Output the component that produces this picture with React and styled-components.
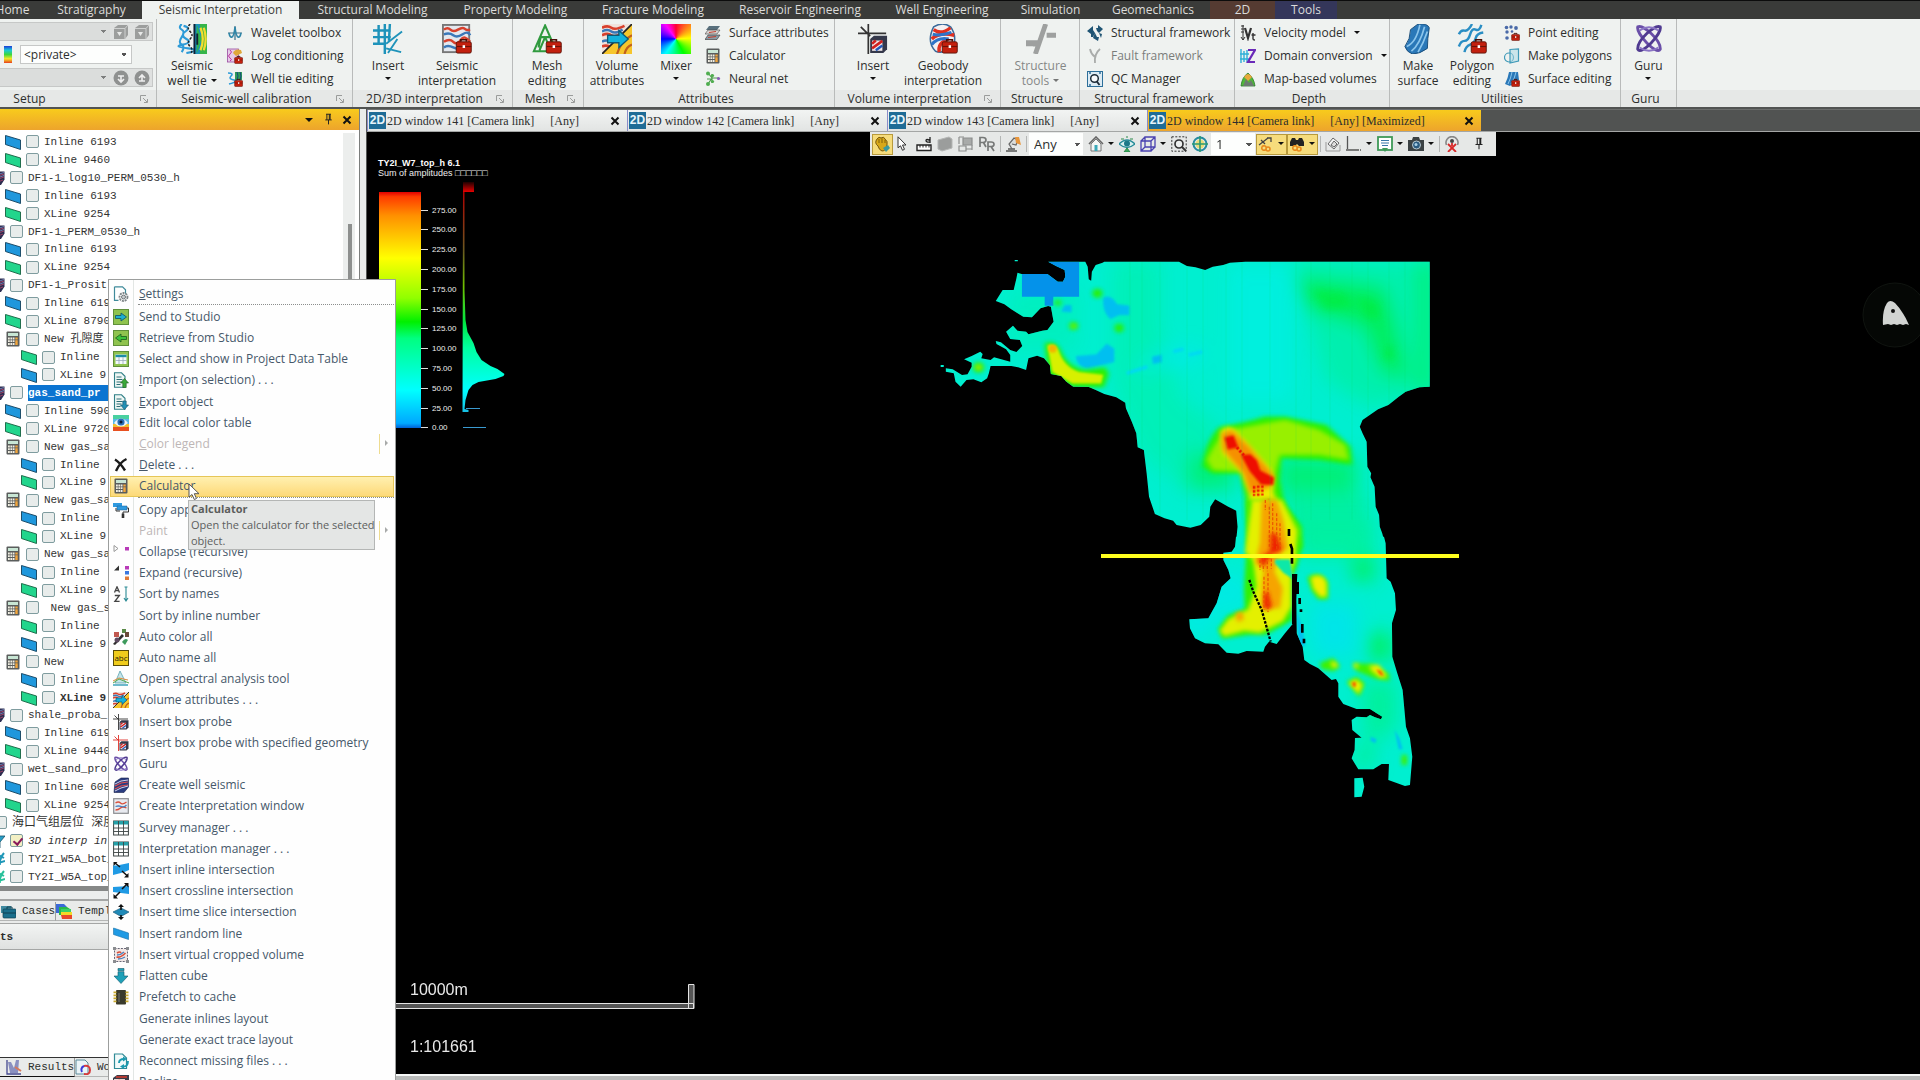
import styled, { createGlobalStyle } from 'styled-components'



/* ---------- data ---------- */

const MAIN_TABS = [
    { name: 'Home', w: 57 },
    { name: 'Stratigraphy', w: 101 },
    { name: 'Seismic Interpretation', w: 157, kind: 'active' },
    { name: 'Structural Modeling', w: 147 },
    { name: 'Property Modeling', w: 139 },
    { name: 'Fracture Modeling', w: 136 },
    { name: 'Reservoir Engineering', w: 158 },
    { name: 'Well Engineering', w: 126 },
    { name: 'Simulation', w: 91 },
    { name: 'Geomechanics', w: 114 },
    { name: '2D', w: 65, kind: 'brown' },
    { name: 'Tools', w: 62, kind: 'navy' },
]

const GROUPS = [
    {
        name: 'Seismic-well calibration', w: 196, launcher: true,
        big: [{ icon: 'wellTie', lines: ['Seismic', 'well tie'], w: 70, arrow: 'side' }],
        small: [['wavelet', 'Wavelet toolbox'], ['logCond', 'Log conditioning'], ['wellTieEdit', 'Well tie editing']],
    },
    {
        name: '2D/3D interpretation', w: 160, pad: 2, launcher: true,
        big: [
            { icon: 'insertGrid', lines: ['Insert'], w: 66, arrow: 'below' },
            { icon: 'seisInterp', lines: ['Seismic', 'interpretation'], w: 72 },
        ],
    },
    {
        name: 'Mesh', w: 71, launcher: true,
        big: [{ icon: 'mesh', lines: ['Mesh', 'editing'], w: 68 }],
    },
    {
        name: 'Attributes', w: 251,
        big: [
            { icon: 'volAttr', lines: ['Volume', 'attributes'], w: 66 },
            { icon: 'mixer', lines: ['Mixer'], w: 52, arrow: 'below' },
        ],
        gap: 3,
        small: [['surfAttr', 'Surface attributes'], ['calc', 'Calculator'], ['neural', 'Neural net']],
    },
    {
        name: 'Volume interpretation', w: 166, launcher: true,
        big: [
            { icon: 'insertBox', lines: ['Insert'], w: 76, arrow: 'below' },
            { icon: 'geobody', lines: ['Geobody', 'interpretation'], w: 64 },
        ],
    },
    {
        name: 'Structure', w: 79,
        big: [{ icon: 'structure', lines: ['Structure', 'tools'], w: 79, arrow: 'side', off: true }],
    },
    {
        name: 'Structural framework', w: 155, gap: 7,
        small: [['sframe', 'Structural framework'], ['fframe', 'Fault framework', 'off'], ['qc', 'QC Manager']],
    },
    {
        name: 'Depth', w: 155, gap: 5,
        small: [['velocity', 'Velocity model', 'arrow'], ['domain', 'Domain conversion', 'arrow'], ['mapvol', 'Map-based volumes']],
    },
    {
        name: 'Utilities', w: 231,
        big: [
            { icon: 'makeSurface', lines: ['Make', 'surface'], w: 56 },
            { icon: 'polyEdit', lines: ['Polygon', 'editing'], w: 52 },
        ],
        gap: 6,
        small: [['pointEdit', 'Point editing'], ['makePoly', 'Make polygons'], ['surfEdit', 'Surface editing']],
    },
    {
        name: 'Guru', w: 56,
        big: [{ icon: 'guru', lines: ['Guru'], w: 55, arrow: 'below' }],
    },
]

const TREE = [
    [1, 'inl', 'Inline 6193'], [1, 'xl', 'XLine 9460'],
    [0, 'cube', 'DF1-1_log10_PERM_0530_h'], [1, 'inl', 'Inline 6193'], [1, 'xl', 'XLine 9254'],
    [0, 'cube', 'DF1-1_PERM_0530_h'], [1, 'inl', 'Inline 6193'], [1, 'xl', 'XLine 9254'],
    [0, 'cube', 'DF1-1_Prosit'], [1, 'inl', 'Inline 619'], [1, 'xl', 'XLine 8790'],
    [1, 'calc', 'New 孔隙度'], [2, 'xl', 'Inline'], [2, 'inl', 'XLine 9'],
    [0, 'cube', 'gas_sand_pr', 'selected'], [1, 'inl', 'Inline 590'], [1, 'xl', 'XLine 9720'],
    [1, 'calc', 'New gas_sa'], [2, 'inl', 'Inline'], [2, 'xl', 'XLine 9'],
    [1, 'calc', 'New gas_sa'], [2, 'inl', 'Inline'], [2, 'xl', 'XLine 9'],
    [1, 'calc', 'New gas_sa'], [2, 'inl', 'Inline'], [2, 'xl', 'XLine 9'],
    [1, 'calc', ' New gas_s'], [2, 'xl', 'Inline'], [2, 'inl', 'XLine 9'],
    [1, 'calc', 'New'], [2, 'inl', 'Inline'], [2, 'xl', 'XLine 9', 'bold'],
    [0, 'cube', 'shale_proba_'], [1, 'inl', 'Inline 619'], [1, 'xl', 'XLine 9440'],
    [0, 'cube', 'wet_sand_pro'], [1, 'inl', 'Inline 608'], [1, 'xl', 'XLine 9254'],
    [-1, 'cube', '海口气组层位 深度', 'cjk'], [0, 'filter', '3D interp in', 'italic'],
    [0, 'horizonB', 'TY2I_W5A_bot_'], [0, 'horizonG', 'TY2I_W5A_top_'],
]

const MENU = [
    { icon: 'settings', text: 'Settings', key: true },
    'sep',
    { icon: 'send', text: 'Send to Studio' },
    { icon: 'retrieve', text: 'Retrieve from Studio' },
    { icon: 'tableGreen', text: 'Select and show in Project Data Table' },
    { icon: 'import', text: 'Import (on selection) . . .', key: true },
    { icon: 'export', text: 'Export object', key: true },
    { icon: 'colorTable', text: 'Edit local color table' },
    { text: 'Color legend', key: true, off: true, sub: true },
    { icon: 'del', text: 'Delete . . .', key: true },
    { icon: 'calc', text: 'Calculator', hot: true },
    'sep',
    { icon: 'paintCopy', text: 'Copy appearance' },
    { text: 'Paint', off: true, sub: true },
    { icon: 'collapse', text: 'Collapse (recursive)' },
    { icon: 'expand', text: 'Expand (recursive)' },
    { icon: 'sortAZ', text: 'Sort by names' },
    { text: 'Sort by inline number' },
    { icon: 'autoColor', text: 'Auto color all' },
    { icon: 'abc', text: 'Auto name all' },
    { icon: 'spectral', text: 'Open spectral analysis tool' },
    { icon: 'volAttr', text: 'Volume attributes . . .' },
    { icon: 'insertBox', text: 'Insert box probe' },
    { icon: 'insertBoxRed', text: 'Insert box probe with specified geometry' },
    { icon: 'guru', text: 'Guru' },
    { icon: 'wellSeis', text: 'Create well seismic' },
    { icon: 'interpWin', text: 'Create Interpretation window' },
    { icon: 'table', text: 'Survey manager . . .' },
    { icon: 'table', text: 'Interpretation manager . . .' },
    { icon: 'interInl', text: 'Insert inline intersection' },
    { icon: 'interXl', text: 'Insert crossline intersection' },
    { icon: 'interTime', text: 'Insert time slice intersection' },
    { icon: 'randomLine', text: 'Insert random line' },
    { icon: 'cropVol', text: 'Insert virtual cropped volume' },
    { icon: 'flatten', text: 'Flatten cube' },
    { icon: 'chip', text: 'Prefetch to cache' },
    { text: 'Generate inlines layout' },
    { text: 'Generate exact trace layout' },
    { icon: 'reconnect', text: 'Reconnect missing files . . .' },
    { icon: 'realize', text: 'Realize' },
]

const WINDOWS = [141, 142, 143, 144]


/* ---------- icons ---------- */

const Toolbox = () => (
    <g>
        <path d="M10 9.5V8.4h3v1.1" fill="none" stroke="#4a1008" strokeWidth=".9" />
        <rect x="7.6" y="9.5" width="8" height="6" rx=".8" fill="#c3200e" stroke="#5e1208" strokeWidth=".5" />
        <path d="M7.8 12h7.8" stroke="#6e1208" strokeWidth=".6" />
        <rect x="11" y="11.3" width="1.3" height="1.5" fill="#fff" />
    </g>
)

const Seis = () => (
    <g fill="none" strokeWidth="1.3">
        <path d="M1 3q2-1.500 3.500 0t4 0 3.500-.5 3 .5M1 9.500q3-2 5 0t4-1 5 1" stroke="#d8402c" />
        <path d="M1 5.500q3-1 5 .5t5-.5 4 .5M1 12.500q2-1.500 5 0t5-.5 4 .5" stroke="#3b78b8" />
    </g>
)

const Probe = ({ c }) => (
    <g>
        <path d="M0 5h15M5.500 0v16M1.500 1.500l5 5" stroke={c} strokeWidth=".9" fill="none" />
        <path d="M6.500 8l2-1.800h7v7.300l-2 2h-7z" fill="#34384a" />
        <rect x="7.500" y="8.800" width="5.500" height="5.500" fill="#f1e8ea" />
        <path d="M7.500 13l5.500-4M7.500 10.500l2-1.700" stroke="#d02020" strokeWidth="1.400" />
        <path d="M9.500 14l3.500-2.500" stroke="#2458b8" strokeWidth="1.300" />
    </g>
)

const Doc = () => (
    <g>
        <path d="M1.500.8h7l3.500 3.500v11h-10.500z" fill="#eef6f4" stroke="#2f7f86" strokeWidth="1.100" />
        <path d="M3.500 5h5M3.500 7.500h6M3.500 10h5M3.500 12.500h4" stroke="#2f6f76" strokeWidth="1" />
    </g>
)

const GreenTile = ({ children }) => (
    <g>
        <rect x=".5" y=".5" width="15" height="15" fill="#8fc34e" stroke="#5f8f3a" />
        {children}
    </g>
)

const TableGrid = () => (
    <g>
        <rect x=".6" y="1" width="14.800" height="14" fill="#fff" stroke="#3c4444" />
        <rect x=".6" y="1" width="14.800" height="3.500" fill="#25a0a8" />
        <path d="M.6 8h14.800M.6 11.500h14.800M5.500 1v14M10.500 1v14" stroke="#3c4444" strokeWidth=".9" />
    </g>
)

const Knot = () => (
    <g fill="none" strokeWidth="1.500">
        <path d="M2 1.500C5 0 14.500 9 14 13.500 12 17 1 5 2 1.500z" stroke="#6a4fa8" />
        <path d="M14 1.500C11 0 1.500 9 2 13.500 4 17 15 5 14 1.500z" stroke="#4f3a90" />
        <path d="M3 3.500Q8 0 13 3.500M3 12.500Q8 16 13 12.500" stroke="#8a74c4" strokeWidth="1" />
    </g>
)

const ICONS = {
    inl: <path d="M.5 1.500l15 4.500v9.500l-15-5z" fill="#1f97dc" stroke="#123f5c" strokeWidth=".9" />,
    xl: <path d="M.5 1.500l15 4.500v9.500l-15-5z" fill="#22d58c" stroke="#14603f" strokeWidth=".9" />,
    cube: (
        <g>
            <path d="M1 5l5-3.500h9.500v8L12 15H4z" fill="#2b2c50" />
            <path d="M3 8l12-4M4 11l11-4M5 13.500l9-3.500" stroke="#b9476a" strokeWidth=".8" />
            <path d="M3 6.500l12-4M4 9.500l11-4" stroke="#8ea0d8" strokeWidth=".7" />
        </g>
    ),
    calc: (
        <g>
            <rect x="1.500" y=".6" width="13" height="15" rx="1" fill="#5a5d5c" />
            <rect x="3" y="2" width="10" height="3" fill="#c8e6d4" />
            <path d="M3 7.500h6.500M3 10.200h6.500M3 13h6.500" stroke="#f2efe2" strokeWidth="1.800" strokeDasharray="1.800 .6" />
            <path d="M11.500 6.600v1.800M11.500 9.300v4.600" stroke="#f2a63c" strokeWidth="2.400" />
        </g>
    ),
    filter: <path d="M1 3h15l-5 6v6l-3-2V9z" fill="#2a9fc8" stroke="#12526a" strokeWidth=".8" />,
    horizonB: <path d="M6 2l9 5M6 13l10-3M9 3l1 10M15 2q-5 6-4 12" stroke="#1f97b8" strokeWidth="2" fill="none" />,
    horizonG: <path d="M6 2l9 5M6 13l10-3M9 3l1 10M15 2q-5 6-4 12" stroke="#28c09a" strokeWidth="2" fill="none" />,

    wellTie: (
        <g>
            <path d="M2.500 0q-2 2 0 3t0 4 0 4 0 4M3.500 1q4 1 1 3T5 8t-2 3 3 2-1 2.500" stroke="#2d9bd8" strokeWidth="1.100" fill="none" />
            <path d="M7 0q-2 2 0 4t0 4 0 4 0 4" stroke="#222" strokeWidth=".8" strokeDasharray="1.200 .8" fill="none" />
            <path d="M9 0v16h7V0z" fill="#1a8fc0" />
            <path d="M10.500 0v16L13 8zM12 0q2 8 0 16h4V0z" fill="#35b54a" />
            <path d="M12.500 2q2.500 6 0 12M14.300 2q2 6 0 12" stroke="#f4dc30" strokeWidth="1.200" fill="none" />
            <path d="M9.300 0v16M10.800 5v6" stroke="#123" strokeWidth="1" />
        </g>
    ),
    wavelet: (
        <g>
            <path d="M8 1v14M1 8h14" stroke="#3a6f86" strokeWidth="1.200" />
            <path d="M2 8q1 5 3 4T8 2q1 9 3 10t3-4" stroke="#2f86a8" strokeWidth="1.600" fill="none" />
        </g>
    ),
    logCond: (
        <g>
            <rect x=".5" y="1" width="11" height="13" fill="#e6cde8" stroke="#9a4aa0" strokeWidth=".8" />
            <path d="M3 2q3 2 0 4t0 4 0 3" stroke="#c030a0" fill="none" />
            <path d="M6 5q2-5 8-3l1 3-6 3z" fill="#e0a83a" />
            <Toolbox />
        </g>
    ),
    wellTieEdit: (
        <g>
            <path d="M1 2q6 0 3 3t3 4-5 4" stroke="#2d9bd8" strokeWidth="1.600" fill="none" />
            <path d="M8 1h7v8H8z" fill="#2f9a58" />
            <path d="M10 1q2 4 0 8M13 1q2 4 0 8" stroke="#124a7a" fill="none" />
            <Toolbox />
        </g>
    ),
    insertGrid: (
        <g stroke="#1e93ba" strokeWidth="1.300" fill="none">
            <path d="M3 .5v10M6.300 0v16M9 0l-.5 9M0 3.500h9.500M0 7h9.500M0 10.500h6" />
            <path d="M7 10.500L15.500 4M7 13l8 2M8 15.500L13 8" strokeWidth="1" />
        </g>
    ),
    seisInterp: (
        <g>
            <rect x=".5" y=".5" width="14" height="14.500" fill="#e4e8ee" stroke="#777" />
            <Seis /><Toolbox />
        </g>
    ),
    mesh: (
        <g>
            <path d="M7 .8L1 14.500h12zM4.500 7h5M7 7L4 14M7 7l3 7M4.500 7.500l-1 5" fill="none" stroke="#2f9a3e" strokeWidth="1.100" />
            <Toolbox />
        </g>
    ),
    volAttr: (
        <g>
            <path d="M0 0h16L0 16z" fill="#f0e2dc" />
            <path d="M0 2q3-1.500 5 0t7-1M0 6q3-1.500 5 0t5-1M0 12q2-1 4 0" stroke="#d8402c" strokeWidth="1.400" fill="none" />
            <path d="M0 4q3-1.500 5 0t6-1M0 9.500q2-1.500 5 0" stroke="#3b78b8" strokeWidth="1.300" fill="none" />
            <path d="M16 0v16H0z" fill="#f6c62c" />
            <path d="M16 6q-6 3-8 10M16 11q-3 1-4 5" stroke="#c0601c" strokeWidth="1.200" fill="none" />
            <path d="M16 0L0 16" stroke="#222" strokeWidth=".9" />
            <path d="M3 6h6V3.500L14 8l-5 4.500V10H3z" fill="#12b2dc" stroke="#0c5a78" strokeWidth=".7" />
        </g>
    ),
    surfAttr: (
        <g>
            <path d="M4 1h11l-3 4H1z" fill="#58707c" />
            <path d="M3 5h12l-3 4H0z" fill="#d8d4d2" stroke="#444" strokeWidth=".6" />
            <path d="M3 10h12l-3 4.500H0z" fill="#8a9aa4" stroke="#333" strokeWidth=".6" />
            <path d="M4 7.500l7-1M3 12.500l8-1" stroke="#c04030" strokeWidth="1.200" />
        </g>
    ),
    neural: (
        <g>
            <path d="M3 2l4 5-4 6M7 7h7M7 3v9M2 8h5" stroke="#4a9a4a" strokeWidth="1.100" fill="none" />
            <g fill="#4fae4f"><circle cx="3" cy="2.500" r="2" /><circle cx="3" cy="13" r="2" /><circle cx="7.500" cy="4.500" r="1.600" /><circle cx="7.500" cy="10.500" r="1.600" /></g>
            <circle cx="13.500" cy="7.500" r="1.600" fill="#8a5ab8" />
        </g>
    ),
    insertBox: <Probe c="#333" />,
    insertBoxRed: <Probe c="#e03028" />,
    geobody: (
        <g>
            <path d="M3 1.500q5-3 9 0 3 4 2 9-5 6-10 4-5-5-1-13z" fill="#f4f0f2" stroke="#3a6a9a" strokeWidth=".8" />
            <path d="M3 3q4 3 9-1M2 8q4-4 12-2M6 15q-1-5 5-7" stroke="#e03020" strokeWidth="1.800" fill="none" />
            <path d="M2.500 5.500q4 1 10-1M2 11q3-4 9-3" stroke="#2f74c8" strokeWidth="1.600" fill="none" />
            <Toolbox />
        </g>
    ),
    structure: <path d="M10.500 0L5 16M0 10h5v2M0 10.500h4.500M11 6h5" stroke="#5c5e5d" strokeWidth="2.600" fill="none" />,
    sframe: (
        <g fill="#1f5474">
            <path d="M0 6l6-5v4l2 3-2 4H4V9zM9 3h2V0l5 4-4 4-2-2zM8 8l2 4h2l-1 4-5-3zM12 8l3 1-1 4z" />
        </g>
    ),
    fframe: <path d="M3 1q1 5 5 8M13 1q-6 5-5 14" stroke="#7c7e7d" strokeWidth="1.800" fill="none" />,
    qc: (
        <g>
            <rect x=".5" y=".5" width="15" height="15" fill="#dcebf4" stroke="#2c6f9a" />
            <circle cx="7.500" cy="7.500" r="3.800" fill="#f8fafc" stroke="#1d2c38" strokeWidth="1.500" />
            <path d="M9.500 10l3 4" stroke="#1d2c38" strokeWidth="1.800" />
            <path d="M2 2h2M12 2h2M2 14h2" stroke="#2c6f9a" strokeWidth="1.500" />
        </g>
    ),
    velocity: (
        <g fill="none" stroke="#333">
            <path d="M3 0v15M1 12l2 3 2-3M1 1h3M1 4h3M1 7h3" strokeWidth="1" />
            <path d="M5 3l3 10 3-10" strokeWidth="2.200" />
            <path d="M13 8v6q0 1 2 1M11.500 10h4" strokeWidth="1.400" />
        </g>
    ),
    domain: (
        <g fill="none">
            <path d="M1 1v14M4 3v11M7 2v12M0 6h9M0 11h9" stroke="#2fb0d8" strokeWidth="1.400" />
            <path d="M8 2h7L8 14h7" stroke="#6a2ab8" strokeWidth="2.200" />
        </g>
    ),
    mapvol: (
        <g>
            <path d="M1 15Q2 6 8 2q6 5 7 13z" fill="#4fb83a" stroke="#2a7a2a" strokeWidth=".8" />
            <path d="M4 6q4-6 8 0l-4 4z" fill="#e8a83a" />
            <path d="M3 15l3-7 3 4 2-3 3 6" fill="#6d7a72" />
        </g>
    ),
    makeSurface: (
        <g>
            <path d="M8 0q5-.5 6 2-1 6-1 11-4 3-8 3-3-1-4-4 3-4 3-9z" fill="#2a78b8" stroke="#184c78" strokeWidth=".5" />
            <path d="M2 12q5-2 7-11.500M4.500 14.500Q9 11 11.500 1.500M8 15q3-5 5-11" stroke="#8cc6ec" strokeWidth=".9" fill="none" />
        </g>
    ),
    polyEdit: (
        <g>
            <path d="M1 5.500Q2 3 4 3.500T8 0M1 12q1-3 3-3t3-3.500 3-2.500 3-2.500M4 15q.500-3 3-4t3-3.500 4-3" stroke="#2a8ec4" strokeWidth="1.300" fill="none" />
            <Toolbox />
        </g>
    ),
    pointEdit: (
        <g>
            <g fill="#4a6aa8"><circle cx="2.500" cy="2.500" r="1.800" /><circle cx="7" cy="2" r="1.700" /><circle cx="12" cy="3" r="1.900" /><circle cx="3" cy="7" r="1.700" /><circle cx="3" cy="13" r="1.800" /><circle cx="8" cy="6.500" r="1.300" /></g>
            <Toolbox />
        </g>
    ),
    makePoly: (
        <g fill="none" stroke="#3f9ab8" strokeWidth="1.200">
            <circle cx="5" cy="9.500" r="4.500" />
            <path d="M6 1.500l8.500-.5v12L6 15z" fill="#a8d8e4" fillOpacity=".5" />
        </g>
    ),
    surfEdit: (
        <g>
            <path d="M5 1h9l1 8q-6 3-9 6l-5-2q3-6 4-12z" fill="#2a78b8" />
            <path d="M4 13q3-6 4-12M7 13q4-6 5-12" stroke="#8cc6ec" fill="none" />
            <Toolbox />
        </g>
    ),
    guru: <Knot />,

    settings: (
        <g>
            <path d="M1.500.8h8l3 3v4M1.500.8v13.500h4" fill="none" stroke="#3f8a9a" strokeWidth="1.200" />
            <circle cx="10.500" cy="11" r="4" fill="none" stroke="#7d8486" strokeWidth="1.800" strokeDasharray="2 .9" />
            <circle cx="10.500" cy="11" r="2" fill="#c8ccce" stroke="#6d7476" />
        </g>
    ),
    send: <GreenTile><path d="M2.500 6.500H8V4l5.500 4L8 12V9.500H2.500z" fill="#1fb0d0" stroke="#0d4f66" strokeWidth=".8" /></GreenTile>,
    retrieve: <GreenTile><path d="M13.500 6.500H8V4L2.500 8 8 12V9.500h5.500z" fill="#3cc43c" stroke="#1c5a1c" strokeWidth=".8" /></GreenTile>,
    tableGreen: <GreenTile><rect x="2.500" y="3.500" width="11" height="9.500" fill="#f4fafc" /><path d="M2.500 5h11" stroke="#1d8ea8" strokeWidth="2.400" /><path d="M2.500 9.500h11M6 6v7M10 6v7" stroke="#9ab" strokeWidth=".8" /></GreenTile>,
    import: <g><Doc /><path d="M11.500 6.500l4 4.500h-2.300v4.500H9.800V11H7.500z" fill="#3aa83a" stroke="#1d5a1d" strokeWidth=".6" /></g>,
    export: <g><Doc /><path d="M11.500 15.500l4-4.500h-2.300V7H9.800v4H7.500z" fill="#2390b4" stroke="#12506a" strokeWidth=".6" /></g>,
    colorTable: (
        <g>
            <rect width="16" height="4" fill="#48d0a0" /><rect y="4" width="16" height="5" fill="#58b8e8" /><rect y="9" width="16" height="3" fill="#f0c030" /><rect y="12" width="16" height="4" fill="#e85020" />
            <path d="M1 8q7-9 14 0-7 7-14 0z" fill="#eef6fa" /><circle cx="8" cy="7" r="3.600" fill="#2870b8" /><circle cx="8" cy="7" r="1.500" fill="#0a1c38" />
        </g>
    ),
    del: <path d="M2 2.500q5 3 10 11M13.500 2Q7 5 3 14" stroke="#1a1a1a" strokeWidth="2.400" fill="none" />,
    paintCopy: (
        <g>
            <path d="M0 1h9v4H0z" fill="#2f9ae0" /><path d="M4 4h10v4H4z" fill="#2f9ae0" stroke="#1b5f94" strokeWidth=".5" />
            <path d="M14 6h1.500v4H10v2M3 6v3h4" stroke="#333" fill="none" /><rect x="8.700" y="11.500" width="2.600" height="4.500" fill="#333" />
        </g>
    ),
    collapse: <g><path d="M1 1.500l4 3-4 3z" fill="none" stroke="#999" /><rect x="12" y="3" width="4" height="3.500" fill="#b83ab8" /></g>,
    expand: <g><path d="M1 5.500h5v-5z" fill="#333" /><rect x="12" y="1" width="4" height="3.500" fill="#b83ab8" /><rect x="12" y="6" width="4" height="3.500" fill="#3a78e0" /><rect x="12" y="11.500" width="4" height="3.500" fill="#e07a38" /></g>,
    sortAZ: (
        <g fill="none" stroke="#444" strokeWidth="1.300">
            <path d="M1.500 6.500L4 .8l2.500 5.700M2.300 4.700h3.400M1.800 9.500h4.600l-4.600 6h4.800" />
            <path d="M13 .5v14M11 12l2 3 2-3M11.500 1h3" stroke="#2a8a94" strokeWidth="1.100" />
        </g>
    ),
    autoColor: (
        <g>
            <path d="M0 15L9 5l2 2-9 9z" fill="#2e2e2e" /><path d="M1 3h5v5H1z" fill="#c05850" /><path d="M9 0h4v4H9z" fill="#5a8a48" /><path d="M12 3h4v5h-4z" fill="#6a4a3a" />
            <path d="M9 13q3-5 6-2l-3 5z" fill="#3d9a5c" /><circle cx="4" cy="11" r="2.500" fill="#5d4a60" />
        </g>
    ),
    spectral: (
        <g>
            <path d="M7 0l6 12H2z" fill="#c4e4ea" stroke="#4a9aa8" strokeWidth=".7" />
            <path d="M0 10l6-3 9 2" stroke="#e08a3c" fill="none" /><path d="M0 12l6-4 10 4" stroke="#58a84a" fill="none" /><path d="M0 14h15" stroke="#4aa8c0" strokeWidth="1.600" />
        </g>
    ),
    wellSeis: (
        <g>
            <path d="M2 5l6-4h7.500v9L11 15.500H1z" fill="#2a3c80" stroke="#16204a" strokeWidth=".6" />
            <path d="M2 9l6-3 7-1M2 12l6-3 7-1" stroke="#e05050" strokeWidth="1.100" fill="none" /><path d="M2 7l6-3 7-1M2 14l6-3 7-2" stroke="#e6e2f4" strokeWidth=".9" fill="none" />
        </g>
    ),
    interpWin: (
        <g>
            <rect x=".7" y=".7" width="14.600" height="14.600" fill="#e8eaf0" stroke="#8a8c90" strokeWidth="1.200" />
            <path d="M2.500 5q3-2 5 0t6-1M2.500 12q3 0 5-2t6 0" stroke="#d8503c" strokeWidth="1.300" fill="none" /><path d="M2.500 8.500q3-1 6 0t5-1.500" stroke="#4a82c0" strokeWidth="1.300" fill="none" />
        </g>
    ),
    table: <TableGrid />,
    interInl: <g><path d="M0 3.500h4L16 1v7q-4 2-8 3l-8 2z" fill="#1f9ae4" /><path d="M2 1l5 4M9 9l5.500 5" stroke="#111" strokeWidth="1.500" /><path d="M.5 0h4l-4 4zM15.500 15.500h-4.500l4.500-4.500z" fill="#111" /></g>,
    interXl: <g><path d="M0 4l16-1v8L0 9z" fill="#1f9ae4" /><path d="M14 1L9 6M7 9l-5 5" stroke="#111" strokeWidth="1.500" /><path d="M15.500 0v4.500L11 0zM.5 15.500V11L5 15.500z" fill="#111" /></g>,
    interTime: <g><path d="M8 4l8 4-8 4.500L0 8z" fill="#1f8ab8" stroke="#125070" strokeWidth=".6" /><path d="M8 2v4M8 11v3" stroke="#111" strokeWidth="1.600" /><path d="M8 0l3 3H5zM8 16l3-3H5z" fill="#111" /></g>,
    randomLine: <path d="M.5 2l6 2 9 3v6.500l-9-3-6-2z" fill="#1f9ae4" stroke="#1670a8" strokeWidth=".6" />,
    cropVol: (
        <g>
            <rect x="1.500" y="1.500" width="13" height="13" fill="#f0e6e4" stroke="#556" strokeWidth=".9" strokeDasharray="2 1.200" />
            <path d="M3.500 10q4 1 9-4M4 6q3-2 4 0" stroke="#d8503c" strokeWidth="1.600" fill="none" /><path d="M4 8q4 0 7-3M5 12q4 0 7-2" stroke="#4a82c0" strokeWidth="1.300" fill="none" />
            <path d="M0 0h3v3H0zM13 0h3v3h-3zM0 13h3v3H0zM13 13h3v3h-3z" fill="#8a8c90" />
        </g>
    ),
    flatten: <g><path d="M5 .5h6v2.200H5zM5 3.700h6V8h4l-7 7.500L1 8h4z" fill="#1ea0b8" stroke="#11586a" strokeWidth=".6" /></g>,
    chip: <g><rect x="3" y="1" width="10" height="14.500" rx="1" fill="#3a3a2c" /><path d="M2 2.500v12M14 2.500v12" stroke="#c8a82c" strokeWidth="3" strokeDasharray="1.800 1.200" /><path d="M6 4v9" stroke="#777" /></g>,
    reconnect: <g><path d="M1.500 1h8l4 4v10.500h-12z" fill="#f2fafa" stroke="#2f8a96" strokeWidth="1.200" /><path d="M6 10q0-4 5-4M15 8q0 6-5 5.500" stroke="#1c9ab0" strokeWidth="1.900" fill="none" /><path d="M10 3.500l4 2.500-4 2.500zM11 16l-4-2.500 4-2.500z" fill="#1c9ab0" /></g>,
    realize: <g><path d="M0 4l4-3h12v10l-3 5H0z" fill="#3a3c48" /><path d="M1 5h11v9H1z" fill="#f0d8d4" /><path d="M1 8q5-3 11 0M1 12q5-3 11 0M3 3h11" stroke="#d83a2c" strokeWidth="1.600" fill="none" /></g>,

    hand: <g><path d="M3 3q2-3 4-1 3-2 4 1 3 2 2 6-1 6-5 6-3-1-4-5-4-3-1-7z" fill="#d8a818" stroke="#6a4c08" strokeWidth=".9" /><path d="M5 3v4M8 2.500V7M11 4v3" stroke="#6a4c08" strokeWidth=".8" /><path d="M9 12l5-3 2 3-4 4z" fill="#3a9aa0" /></g>,
    arrowTool: <g><path d="M3 .8v11l2.500-2 2 4.500 2-1-2-4.300h3.500z" fill="#fff" stroke="#333" /></g>,
    ruler: <g><path d="M1 9h14v5.500H1z" fill="#fff" stroke="#222" strokeWidth="1.400" /><path d="M4 9v2.500M7 9v2.500M10 9v2.500M13 9v2.500" stroke="#222" /><path d="M14 1v6M14 4.500q-4-2-4 0t4 1.500" stroke="#222" strokeWidth="1.300" fill="none" /></g>,
    book: <path d="M1 4l11-3 3 2v9L5 15l-4-2z" fill="#9b9d9c" stroke="#b4b6b5" />,
    copyGray: <g fill="none" stroke="#8c8e8d" strokeWidth="1.200"><path d="M1 10h7v5H1zM1 1h5M1 1v7M8 13h6M14 9v5" /><path d="M5 2h9v7H5z" fill="#a8aaa9" /></g>,
    rr: <path d="M1 11V1.500h3q3 0 3 2.500T4 6.500H1M4.500 6.500L7 11M9 15V6h3q3 0 3 2.300T12 10.500H9M12 10.500l3 4.500" stroke="#777978" strokeWidth="1.700" fill="none" />,
    magic: <g><path d="M1 15h11M3 13h7" stroke="#555" strokeWidth="1.300" /><path d="M7 13L4 8l5-6 4 2-2 5-4-1" stroke="#666" strokeWidth="1.200" fill="#dadcdb" /><path d="M10 1h4l2 8-5-2z" fill="#e8963c" /></g>,
    home: <g><path d="M1 8l7-7 7 7" fill="none" stroke="#666" strokeWidth="1.600" /><path d="M3 8v7h10V8L8 3z" fill="#f4f6f5" stroke="#777" /><rect x="6.500" y="9" width="3" height="6" fill="#3aa8b8" /></g>,
    eye: <g><path d="M0 8q8-8 16 0-8 7-16 0z" fill="#d8f0f0" stroke="#258a98" strokeWidth="1.300" /><circle cx="8" cy="7.500" r="3" fill="#1c7888" /><path d="M2 3h3M11 3h3M8 0v2M8 12l3 4H5z" stroke="#2a8a4a" fill="#3aa85a" /></g>,
    box: <path d="M1 5h10v10H1zM5 1h10v10H5zM1 5l4-4M11 5l4-4M11 15l4-4M1 15l4-4" fill="none" stroke="#4a42b0" strokeWidth="1.300" />,
    zoom: <g><path d="M.8.8h14.400v14.400H.8z" fill="none" stroke="#333" strokeDasharray="2 1.500" /><circle cx="8" cy="8" r="4" fill="#eef0ef" stroke="#333" strokeWidth="1.700" /><path d="M11 11l4 4" stroke="#333" strokeWidth="2" /></g>,
    target: <g fill="none"><circle cx="8" cy="8" r="6.500" stroke="#258aa0" strokeWidth="2" /><circle cx="8" cy="8" r="4.500" fill="#e8dc78" /><path d="M8 0v16M0 8h16" stroke="#2a9a70" strokeWidth="1.600" /></g>,
    linkA: <g fill="none"><path d="M1 9l9-7M3 4l4 4M9 2h4v4" stroke="#444" strokeWidth="1.300" /><path d="M4 11a2 2 0 1 0 4 2 2 2 0 1 1 4 0 2 2 0 1 1-4 0 2 2 0 1 0-4-2" stroke="#e88a1c" strokeWidth="1.600" /></g>,
    linkB: <g><path d="M1 6l2-4h3l1 2h2l1-2h3l2 4v4h-5l-2-2-2 2H1z" fill="#222" /><path d="M4 11a2 2 0 1 0 4 2 2 2 0 1 1 4 0 2 2 0 1 1-4 0 2 2 0 1 0-4-2" fill="none" stroke="#e88a1c" strokeWidth="1.600" /></g>,
    eraser: <g fill="#f4f4f4" stroke="#666"><path d="M1 6v9h14V9" fill="none" stroke="#999" /><path d="M3 8l5-6 6 5-5 6z" /><path d="M6 9l3-4 3 3-3 3z" fill="#ddd" /></g>,
    axes: <path d="M1.500 0v14M0 14h15" stroke="#555" strokeWidth="1.300" strokeDasharray="13 1" />,
    notes: <g><rect x="1" y="1" width="14" height="13" fill="#fff" stroke="#3f9a58" strokeWidth="1.800" /><path d="M4 4.500h8M4 7h8M5 9.500h6" stroke="#3a78a8" strokeWidth="1.200" /><path d="M5 12h6l-3 4z" fill="#3f9a58" /></g>,
    camera: <g><path d="M0 4h4l1-3h6l1 3h4v11H0z" fill="#3c4244" /><circle cx="8.500" cy="9" r="4" fill="#2a5a80" stroke="#b8c8d0" /><circle cx="8" cy="8.500" r="1.500" fill="#a8d0e8" /></g>,
    person: <g><path d="M2.500 9a6 6 0 1 1 11 0" fill="none" stroke="#888" strokeWidth="1.600" /><circle cx="8" cy="5" r="2" fill="#444" /><path d="M8 7v3M4 8l8 8M12 8l-8 8" stroke="#d82828" strokeWidth="1.800" /></g>,
    pin: <path d="M5 1.500h6M6 1.500v7M10 1.500v7M9 1.500v7M4 8.500h8M8 8.500V14" stroke="#222" strokeWidth="1.200" fill="none" />,
    cases: <g><path d="M1 3h10v7H1z" fill="#3f8aa0" /><rect x="3" y="6" width="13" height="9" rx="1" fill="#1a6f8c" stroke="#0e4052" strokeWidth=".7" /><path d="M7 6V4h5v2M3 10h13" stroke="#0e4052" fill="none" /></g>,
    templates: <g><path d="M0 1h8l3 3v6H0z" fill="#3a6ad8" /><path d="M3 4h8l3 2v6H3z" fill="#2ab84a" /><path d="M5 6h10v4H5z" fill="#38d068" /><path d="M5 9h11v4H5z" fill="#f4d828" /><path d="M5 12h11v4H6z" fill="#e8482c" /></g>,
    results: <g><path d="M1 1v14h14" stroke="#444a90" strokeWidth="1.300" fill="none" /><path d="M2 3h3l3 6 2-8h3l-1 13H4z" fill="#8a90c0" /><path d="M9 8l6 4" stroke="#d87858" strokeWidth="2" /></g>,
    workflow: <g><path d="M1 1h9l3 3v11H1z" fill="#eaf4f8" stroke="#5a8a9a" /><path d="M9 7q6-1 6 4t-6 4" stroke="#d83a3a" strokeWidth="2" fill="none" /><path d="M9 7q-4 2-2 6" stroke="#3a3ad8" strokeWidth="2" fill="none" /></g>,
}

function Icon({ name, size = 16 }) {
    if (name === 'mixer') return <MixerSwatch />
    if (name === 'abc') return <AbcIcon>abc</AbcIcon>
    return (
        <svg width={size} height={size} viewBox="0 0 16 16" aria-hidden="true">{ICONS[name]}</svg>
    )
}


/* ---------- ribbon ---------- */

function RibbonGroup({ g }) {
    return (
        <Group w={g.w}>
            <GroupBody pad={g.pad}>
                {(g.big || []).map((b) => (
                    <BigButton key={b.icon} w={b.w} off={b.off}>
                        <Icon name={b.icon} size={30} />
                        <BigText>
                            {b.lines.map((t, i) => (
                                <span key={t}>{t}{b.arrow === 'side' && i === 1 && <Caret gap={4} />}</span>
                            ))}
                            {b.arrow === 'below' && <Caret />}
                        </BigText>
                    </BigButton>
                ))}
                {g.small && (
                    <SmallCol gap={g.gap}>
                        {g.small.map(([icon, text, mode]) => (
                            <SmallButton key={text} off={mode === 'off'}>
                                <Icon name={icon} />
                                {text}
                                {mode === 'arrow' && <Caret />}
                            </SmallButton>
                        ))}
                    </SmallCol>
                )}
            </GroupBody>
            <Caption>
                <span>{g.name}</span>
                {g.launcher && <Launcher />}
            </Caption>
        </Group>
    )
}

function Launcher() {
    return (
        <LaunchBtn aria-label="More options">
            <svg width="8" height="8" viewBox="0 0 8 8"><path d="M.5 6V.5H6M3 3l4 4M7.500 4v3.500H4" stroke="#9a9c9b" fill="none" /></svg>
        </LaunchBtn>
    )
}

function SetupGroup() {
    return (
        <Group w={238}>
            <SetupBody>
                <SetupRow>
                    <SetupSelect grow off disabled aria-label="Seismic template"><option></option></SetupSelect>
                    <GrayCube /><GrayCube />
                </SetupRow>
                <SetupRow clear>
                    <Rainbow />
                    <SetupSelect w={112} aria-label="Color table"><option>&lt;private&gt;</option></SetupSelect>
                </SetupRow>
                <SetupRow>
                    <SetupSelect grow off disabled aria-label="Horizon"><option></option></SetupSelect>
                    <GrayRound d="M5 6h6M8 6v5M5 9l3 3 3-3" /><GrayRound d="M5 11h6M8 11V6M5 8l3-3 3 3" />
                </SetupRow>
            </SetupBody>
            <Caption><span>Setup</span><Launcher /></Caption>
        </Group>
    )
}

const GrayCube = () => (
    <SetupBtn aria-label="Pick">
        <svg width="16" height="16" viewBox="0 0 16 16"><path d="M1 4l4-3h10v10l-3 4H1z" fill="#9c9e9d" /><path d="M1 4.500h11V15M12 4.500L15 1" stroke="#cfd1d0" fill="none" /><path d="M4 8h5l-2.500 4z" fill="#e8e9e8" /></svg>
    </SetupBtn>
)

const GrayRound = ({ d }) => (
    <SetupBtn aria-label="Move">
        <svg width="16" height="16" viewBox="0 0 16 16"><circle cx="8" cy="8" r="7.500" fill="#8f9190" /><path d={d} stroke="#eee" strokeWidth="1.600" fill="none" /></svg>
    </SetupBtn>
)


/* ---------- left panel ---------- */

function Explorer() {
    return (
        <Side>
            <SideTitle>
                <TitleBtn aria-label="Menu"><Caret big /></TitleBtn>
                <TitleBtn aria-label="Pin"><Icon name="pin" size={13} /></TitleBtn>
                <TitleBtn aria-label="Close"><Cross /></TitleBtn>
            </SideTitle>
            <TreeBox>
                <TreeList>
                    {TREE.map(([level, icon, text, look], i) => (
                        <TreeRow key={i} level={level}>
                            <Icon name={icon} />
                            <Tick type="checkbox" defaultChecked={icon === 'filter'} />
                            <TreeText look={look}>{text}</TreeText>
                        </TreeRow>
                    ))}
                </TreeList>
                <Scroll><Thumb /></Scroll>
            </TreeBox>
            <Splitter />
            <PaneTabs>
                <PaneTab w={56}><Icon name="cases" />Cases</PaneTab>
                <PaneTab w={100}><Icon name="templates" />Templ</PaneTab>
            </PaneTabs>
            <PaneHead>ts</PaneHead>
            <PaneBody />
            <PaneTabs bottom>
                <PaneTab w={75} on><Icon name="results" />Results</PaneTab>
                <PaneTab w={100}><Icon name="workflow" />Wo</PaneTab>
            </PaneTabs>
        </Side>
    )
}

const Cross = () => (
    <svg width="10" height="10" viewBox="0 0 10 10"><path d="M1.500 1.500l7 7M8.500 1.500l-7 7" stroke="#111" strokeWidth="2" /></svg>
)


/* ---------- context menu ---------- */

function ContextMenu() {
    return (
        <MenuBox role="menu">
            {MENU.map((m, i) => m === 'sep' ? <MenuSep key={i} /> : (
                <MenuItem key={m.text} role="menuitem" off={m.off} hot={m.hot}>
                    <IconCell>{m.icon && <Icon name={m.icon} />}</IconCell>
                    <MenuText>{m.key ? <><u>{m.text[0]}</u>{m.text.slice(1)}</> : m.text}</MenuText>
                    {m.sub && <SubMark />}
                </MenuItem>
            ))}
        </MenuBox>
    )
}


/* ---------- 2D viewport ---------- */

const TOOLBAR = [
    ['hand', 'on'], ['arrowTool'], ['ruler'], ['book'], ['copyGray'], ['rr'], 'sep', ['magic'], 'sep', 'any',
    ['home', 'drop'], ['eye'], ['box', 'drop'], ['zoom'], ['target'], 'one',
    ['linkA', 'ondrop'], ['linkB', 'ondrop'], 'sep', ['eraser'], ['axes', 'drop'], ['notes', 'drop'], ['camera', 'drop'], 'sep', ['person'],
]

function ViewToolbar() {
    return (
        <ToolBar>
            {TOOLBAR.map((t, i) => {
                if (t === 'sep') return <ToolSep key={i} />
                if (t === 'any') return <ToolSelect key={i} w={54} after={3} aria-label="Filter"><option>Any</option></ToolSelect>
                if (t === 'one') return <ToolSelect key={i} w={44} after={1} aria-label="Scale"><option>1</option></ToolSelect>
                const [name, mode = ''] = t
                return (
                    <ToolBtn key={name} on={mode.startsWith('on')} aria-label={name}>
                        <Icon name={name} />
                        {mode.endsWith('drop') && <Caret gap={4} />}
                    </ToolBtn>
                )
            })}
            <PinBtn aria-label="pin"><Icon name="pin" size={14} /></PinBtn>
        </ToolBar>
    )
}

const UPPER = 'M372 65L462 65L480 65L487 80L490 118L497 122L499 95L510 75L530 68L535 65L752 65L775 78L800 82L828 90L850 80L880 75L900 68L945 65L1480 65L1480 440L1450 442L1410 455L1390 470L1360 495L1330 508L1285 540L1277 560L1285 580L1297 605L1299 680L1310 700L1308 712L1320 740L1323 800L1333 825L1335 860L1342 880L1348 902L918 902L922 860L918 812L895 800L857 778L843 800L840 830L815 855L785 863L745 855L735 842L710 835L682 822L665 770L658 700L650 630L632 622L628 580L615 545L598 505L596 488L570 472L535 462L510 450L490 441L445 440L425 425L410 408L380 402L377 375L360 355L340 347L315 355L308 390L285 382L265 378L205 378L200 400L195 415L178 427L155 418L135 420L118 440L103 425L98 400L75 395L75 385L95 388L122 405L138 403L150 380L150 368L128 358L150 348L175 335L182 342L178 355L205 360L215 352L262 365L262 345L250 328L222 312L220 303L235 307L262 330L280 336L297 318L290 300L262 297L250 275L270 257L283 272L308 275L315 283L355 272L370 270L388 245L380 200L372 198L350 205L325 232L300 230L265 208L245 193L220 183L240 150L272 150L280 115L283 98L295 102L370 102L400 125L415 125L422 110L420 90L395 78ZM275 60h9v4h-9zM60 375h9v6h-9z'
const LOWER = 'M468 110L465 140L455 155L430 158L430 180L445 210L452 235L425 260L410 310L385 355L328 358L330 385L345 415L375 430L415 433L440 458L475 461L500 453L550 455L555 440L567 425L590 432L615 400L640 370L640 222L652 222L648 300L650 400L668 440L673 480L690 492L715 505L755 540L768 537L775 550L775 590L790 612L830 627L870 627L890 640L907 650L903 658L885 652L870 645L860 652L830 650L815 660L817 690L845 713L825 714L824 750L815 775L835 808L880 808L905 792L927 792L925 840L975 858L990 855L997 770L990 715L978 680L968 570L952 520L937 470L936 370L948 330L945 280L932 245L920 235L917 130L912 110ZM823 835L848 833L853 860L845 890L823 892Z'
const UP = 'translate(920 240) scale(.3444 .3333)'
const LOW = 'translate(1080 500) scale(.3333)'

const TICKS = ['275.00', '250.00', '225.00', '200.00', '175.00', '150.00', '125.00', '100.00', '75.00', '50.00', '25.00', '0.00']

/* blur with a margin wide enough that narrow bodies keep their soft rim */
const Soft = ({ id, d }) => (
    <filter id={id} x="-60%" y="-60%" width="220%" height="220%"><feGaussianBlur stdDeviation={d} /></filter>
)

function AmplitudeMap() {
    return (
        <g>
            <g clipPath="url(#area)">
                <rect x="900" y="240" width="560" height="580" fill="#00efd0" />
                <g transform={UP}>
                    <g filter="url(#b30)">
                        <path d="M560 60H700V260L760 480 880 560 780 760 640 640 560 420z" fill="#00f0a8" opacity=".6" />
                        <path d="M260 150h200v180h-200z" fill="#00f0b0" opacity=".5" />
                        <path d="M1080 60H1500V460L1300 500 1180 420z" fill="#00f0a0" opacity=".7" />
                        <path d="M1090 110L1350 140 1380 250 1420 420 1340 400 1290 260 1130 210z" fill="#00ee48" opacity=".8" />
                        <path d="M1440 60h60v400h-60z" fill="#00f070" opacity=".8" />
                        <path d="M1040 650h230v110h-230zM780 640h130v110h-130z" fill="#00f070" opacity=".9" />
                        <path d="M1060 760h240v160h-240z" fill="#00f0a0" opacity=".9" />
                        <path d="M700 330L820 320 830 360 600 400z" fill="#00e8f4" opacity=".6" />
                        <path d="M900 80h180v400h-180z" fill="#00f0e8" opacity=".6" />
                    </g>
                    <g fill="#00ec40" filter="url(#b12)">
                        <path d="M1140 150l90 10 30 40-80 10zM1270 170l60 20 4 50-40-10zM1350 320h24v40h-24z" opacity=".7" />
                    </g>
                    <g fill="#06bff0" filter="url(#b4)">
                        <path d="M532 172q25-10 40 20l36 5v28h-30l-25 12q-25-20-21-65zM452 348l60-5 30-32 22 15v40l-80 20q-30-10-32-38zM674 350l28-6v22l-26 6zM420 195h20v22l-30-2z" />
                    </g>
                    <path d="M735 335l30-8M780 345l40-10M600 400l60-20" stroke="#00d8f4" strokeWidth="10" filter="url(#b4)" />
                    <path d="M360 65H462V170H387V197H362V170H296V95H372z" fill="#0492ea" />
                    <g fill="#2cf000" filter="url(#b8)">
                        <path d="M362 310q30-12 46 20 20 50 70 60l60-8 10 20-14 40h-90L372 408z" />
                        <path d="M820 680Q830 600 870 560 940 550 1000 530L1060 530 1180 555 1250 620 1255 675 1160 660 1050 655 1045 720 1060 800 1110 860V920H950L945 780 930 700 850 700z" />
                        <circle cx="515" cy="160" r="14" /><circle cx="446" cy="258" r="12" /><circle cx="578" cy="264" r="13" /><circle cx="170" cy="382" r="16" /><circle cx="400" cy="188" r="9" />
                    </g>
                    <g fill="#98f000" filter="url(#b8)">
                        <path d="M832 660Q870 580 900 570L1000 550 1060 540 1160 570 1235 615 1245 660 1160 645 1045 645 1030 700 850 690z" />
                    </g>
                    <g fill="#f0ea00" filter="url(#b8)">
                        <path d="M872 575q25-30 50 5l45 50 60 70v60l35 60 40 50v50H960L955 760 930 690 880 640z" />
                        <circle cx="446" cy="258" r="5" /><circle cx="170" cy="382" r="7" />
                    </g>
                    <path d="M370 316q20-8 32 14 15 50 60 66l70 8-6 26h-84L384 396z" fill="#d8f000" filter="url(#b4)" />
                    <circle cx="385" cy="326" r="12" fill="#f4b400" filter="url(#b4)" />
                    <path d="M875 580l30-10 50 50 75 90-10 30-60 20-20-60-60-70zM1005 780h16l20 140h-30z" fill="#f69000" filter="url(#b8)" />
                    <path d="M884 592l26-6 14 36-30 6zM932 645l28-2 18 18 10 30 40 22-3 22-35-2-33-40-10-20z" fill="#ee0c00" filter="url(#b4)" />
                    <path d="M920 622l22 26" stroke="#ee0c00" strokeWidth="9" strokeDasharray="7 5" />
                    <path d="M970 738v30M982 736v34M994 736v30" stroke="#ee1800" strokeWidth="7" strokeDasharray="8 4" />
                    <path d="M1003 780v60M1012 776v124M1022 790v110" stroke="#f05800" strokeWidth="5" strokeDasharray="9 5" />
                </g>
                <g transform={LOW}>
                    <g filter="url(#b30)">
                        <path d="M440 200L500 240 520 320 420 340 340 440 300 340z" fill="#00e8f0" opacity=".6" />
                        <path d="M690 310h140v160H700z" fill="#00e0f8" opacity=".6" />
                        <path d="M820 160h60v80h-60zM870 400h60v80h-60z" fill="#00f050" />
                        <path d="M660 60h220v120h-220z" fill="#00f0a0" opacity=".8" />
                        <path d="M840 540h110v140l-90 60z" fill="#00f090" opacity=".8" />
                        <path d="M830 740h50v60h-50z" fill="#00f090" />
                    </g>
                    <path d="M500 0h110l50 80 8 60-18 60-14 30v130l-30 18-50 26h-50l-80 12-12-30 30-40 50-20-2-60 10-160z" fill="#30f000" filter="url(#b8)" />
                    <path d="M516 0h90l46 90-6 90-12 30v110l-25 44-70 34-46-6-60 16-14-16 26-34 60-30 24-70-10-80-24-20z" fill="#e4f000" filter="url(#b8)" />
                    <path d="M545 0h45l20 60 14 84-26 20-15 50 25 50-8 60-50 4-5-70 6-50-26-20 15-60zM466 340l20-6 6 24-20 8z" fill="#f6a400" filter="url(#b8)" />
                    <path d="M572 100h16l18 46-10 10-20 4-26 42-14-24 34-26zM552 280l12-6 12 46-16 10-10-10z" fill="#ee2400" filter="url(#b8)" />
                    <path d="M556 0v30M568 20v120M578 10v130M590 40v110M600 70v80M540 180v30M550 170v44M562 170v44M574 176v30M552 230v100M564 220v116" stroke="#ea4a00" strokeWidth="4" strokeDasharray="9 5" opacity=".8" />
                    <path d="M585 178h45l10 60-30-20-25-28z" fill="#10e8a8" filter="url(#b4)" />
                    <g fill="#3cf000" filter="url(#b8)">
                        <path d="M682 232q40-24 62 16v50h-30l-20-28zM720 488l40-14 20 26-20 14-36-8zM818 490l60 2 50 30v20l-40-6-60-24zM800 545l30-15 24 20-16 40zM965 765h16v30h-16z" />
                    </g>
                    <g fill="#f0ee00" filter="url(#b8)">
                        <path d="M692 232q36-16 48 16v42h-20l-20-24zM752 484l18 4 4 14h-18zM820 492l14-2v14h-10zM866 498l30-4 26 36-20 4-26-20zM806 548l22-10 20 16-12 28z" />
                    </g>
                    <path d="M888 508l16 4 8 16-12-2zM816 546h12v14h-10z" fill="#f07000" filter="url(#b4)" />
                    <path d="M944 690l14 24 10 34h-12zM872 710l18 8-4 12-14-8zM650 330l18 60 8 50-20-10z" fill="#06bff0" filter="url(#b4)" />
                </g>
                <g stroke="#00d860" strokeWidth="1" opacity=".14">
                    {[1130, 1142, 1160, 1187, 1203, 1226, 1242, 1270, 1296, 1311, 1330, 1352, 1368, 1389, 1405].map((x) => <path key={x} d={`M${x} 262V520`} />)}
                </g>
            </g>
            <g transform={LOW} stroke="#000" fill="none">
                <path d="M627 87v21M631 132l5 14v45M640 222v150" strokeWidth="8" />
                <path d="M645 222v180M653 246v36M659 294v18M663 328v8M667 372v26M672 416v14" strokeWidth="8" />
                <path d="M508 240L520 275 545 330 558 375 572 425" strokeWidth="7" strokeDasharray="8 4" />
            </g>
            <path d="M1101 556h358" stroke="#ffff1e" strokeWidth="4" />
        </g>
    )
}

function Viewport() {
    return (
        <Canvas viewBox="367 132 1553 942" preserveAspectRatio="xMinYMin meet" role="img" aria-label="Amplitude map">
            <defs>
                <linearGradient id="bar" x1="0" y1="0" x2="0" y2="1">
                    <stop offset="0" stopColor="#e00000" /><stop offset=".02" stopColor="#ff3c00" />
                    <stop offset=".1" stopColor="#ff9000" /><stop offset=".28" stopColor="#ffff00" />
                    <stop offset=".45" stopColor="#90ff00" /><stop offset=".55" stopColor="#00f000" />
                    <stop offset=".62" stopColor="#00ff80" /><stop offset=".84" stopColor="#00ffff" />
                    <stop offset=".98" stopColor="#00a8ff" /><stop offset="1" stopColor="#0060d8" />
                </linearGradient>
                <linearGradient id="hist" gradientUnits="userSpaceOnUse" x1="0" y1="192" x2="0" y2="428">
                    <stop offset="0" stopColor="#b00000" /><stop offset=".25" stopColor="#6a5a20" />
                    <stop offset=".4" stopColor="#70c000" /><stop offset=".55" stopColor="#00e840" />
                    <stop offset=".66" stopColor="#00ffa0" /><stop offset=".84" stopColor="#00ffff" /><stop offset="1" stopColor="#2890d0" />
                </linearGradient>
                <linearGradient id="block" x1="0" y1="0" x2="0" y2="1">
                    <stop offset="0" stopColor="#200000" /><stop offset="1" stopColor="#e80000" />
                </linearGradient>
                <Soft id="b30" d={28} />
                <Soft id="b12" d={12} />
                <Soft id="b8" d={7} />
                <Soft id="b4" d={3} />
                <clipPath id="area">
                    <path d={UPPER} transform={UP} />
                    <path d={LOWER} transform={LOW} />
                </clipPath>
            </defs>

            <text x="378" y="166" fontSize="9" fontWeight="700" fill="#fff">TY2I_W7_top_h 6.1</text>
            <text x="378" y="176" fontSize="9" fill="#eee">Sum of amplitudes □□□□□□</text>
            <rect x="379" y="192" width="42" height="236" fill="url(#bar)" />
            {TICKS.map((t, i) => (
                <g key={t}>
                    <path d={`M421 ${Math.round(209.500 + i * 19.800)}.500h7`} stroke="#ddd" />
                    <text x="432" y={Math.round(212.500 + i * 19.800)} fontSize="8" fill="#eee">{t}</text>
                </g>
            ))}
            <rect x="463" y="182" width="11" height="10" fill="url(#block)" />
            <path d="M463 192h1.500V290l1 30 2 12 6 11 3 9 5 8 9 6 7 3 7 5-1 2-8 3-17 3-6 3-4 5-3 10-1 9 4 1v2h-6z" fill="url(#hist)" />
            <path d="M466 408.500h14M463 427.500h23" stroke="#3a9ad0" />

            <AmplitudeMap />

            <path d="M380 1003.500h313.500v5H380zM688.500 984.500h5.500v24h-5.500z" fill="#555" stroke="#e4e4e4" />
            <text x="410" y="995" fontSize="16" fill="#e8e8e8">10000m</text>
            <text x="410" y="1052" fontSize="16" fill="#e8e8e8">1:101661</text>

            <circle cx="1895" cy="315" r="32" fill="#050705" stroke="#101410" />
            <path d="M1883 325q-1-14 4-22 3-4 8 0 8 8 14 22l-3-1-3 1-3-1-3 1-3-1-3 1-3-1z" fill="#d2d4d2" />
            <circle cx="1893" cy="311" r="2" fill="#111" />
        </Canvas>
    )
}


export default function App() {
    return (
        <Page>
            <Global />
            <TabStrip>
                {MAIN_TABS.map((t) => <MainTab key={t.name} w={t.w} kind={t.kind}>{t.name}</MainTab>)}
            </TabStrip>
            <Ribbon>
                <SetupGroup />
                {GROUPS.map((g) => <RibbonGroup key={g.name} g={g} />)}
            </Ribbon>
            <Work>
                <Explorer />
                <Main>
                    <WindowTabs>
                        {WINDOWS.map((n) => (
                            <WindowTab key={n} on={n === 144}>
                                <Badge>2D</Badge>
                                <span>2D window {n} [Camera link]</span>
                                <AnyText>[Any]{n === 144 && ' [Maximized]'}</AnyText>
                                <CloseBtn aria-label="Close window"><Cross /></CloseBtn>
                            </WindowTab>
                        ))}
                    </WindowTabs>
                    <View>
                        <Viewport />
                        <ViewToolbar />
                    </View>
                    <StatusLine />
                </Main>
            </Work>
            <ContextMenu />
            <Tip role="tooltip"><b>Calculator</b>Open the calculator for the selected<br />object.</Tip>
            <Pointer width="12" height="18" viewBox="0 0 12 18"><path d="M1 1v13l3-2.500 2.300 5 2.200-1-2.200-4.800H11z" fill="#fff" stroke="#555" /></Pointer>
        </Page>
    )
}




/* ---------- styles ---------- */

const UI = '"Open Sans", "Noto Sans", sans-serif'
const MONO = '"Liberation Mono", "Noto Sans CJK SC", monospace'

const Global = createGlobalStyle`
    * { box-sizing: border-box; }
    body {
        margin: 0;
        background: #000;
        font: 12px/16px ${UI};
        color: #2c2e2d;
    }
    button, select, input { font: inherit; color: inherit; margin: 0; padding: 0; border: 0; background: none; }
    svg { flex: none; display: block; }
`

const Page = styled.div`
    position: relative;
    display: flex;
    flex-direction: column;
    height: 100vh;
    overflow: hidden;
`

const TabStrip = styled.nav`
    display: flex;
    flex: none;
    height: 19px;
    margin-left: -16px;
    border-top: 1px solid #0c0c0c;
    background: #3a3b39;
`

const MainTab = styled.button`
    flex: none;
    width: ${(props) => props.w}px;
    line-height: 16px;
    white-space: nowrap;
    color: ${(props) => (props.kind == 'active' ? '#3a3c3b' : '#dcdcda')};
    background: ${(props) => ({ active: '#eff2f0', brown: '#553b32', navy: '#34365a' }[props.kind] || 'transparent')};
`

const Ribbon = styled.div`
    display: flex;
    flex: none;
    height: 88px;
    margin-left: -81px;
    background: linear-gradient(#eff2f0 71px, #e6e8e7 71px);
`

const Group = styled.section`
    display: flex;
    flex-direction: column;
    flex: none;
    width: ${(props) => props.w}px;
    border-right: 1px solid #b9bbba;
`

const GroupBody = styled.div`
    display: flex;
    height: 71px;
    padding-left: ${(props) => props.pad || 0}px;
`

const BigButton = styled.button`
    display: flex;
    flex-direction: column;
    align-items: center;
    flex: none;
    width: ${(props) => props.w}px;
    padding-top: 5px;
    opacity: ${(props) => (props.off ? 0.55 : 1)};
`

const BigText = styled.span`
    display: flex;
    flex-direction: column;
    align-items: center;
    margin-top: 4px;
    line-height: 15px;
    white-space: nowrap;
`

const Caret = styled.i`
    display: inline-block;
    vertical-align: middle;
    margin: ${(props) => (props.gap ? `0 0 2px ${props.gap}px` : '4px 0')};
    border: ${(props) => (props.big ? 4 : 3)}px solid transparent;
    border-top-color: #111;
    border-bottom: 0;
`

const SmallCol = styled.div`
    display: flex;
    flex-direction: column;
    padding: 2px 0 0 ${(props) => props.gap || 0}px;
`

const SmallButton = styled.button`
    display: flex;
    align-items: center;
    gap: 8px;
    height: 23px;
    white-space: nowrap;
    opacity: ${(props) => (props.off ? 0.6 : 1)};
`

const Caption = styled.div`
    display: flex;
    align-items: center;
    height: 17px;
    padding-right: 6px;
    white-space: nowrap;

    span { flex: 1; text-align: center; }
`

const LaunchBtn = styled.button`
    width: 10px;
    height: 10px;
`

const MixerSwatch = styled.span`
    width: 30px;
    height: 30px;
    background: conic-gradient(#f03, #ff0 24%, #0f0 42%, #0ff 60%, #00f 75%, #f0f 90%, #f03);
`

const AbcIcon = styled.span`
    display: block;
    width: 16px;
    height: 16px;
    border: 1px solid #5a4c08;
    background: #f0cc1c;
    color: #2a2408;
    font-size: 8px;
    line-height: 13px;
    text-align: center;
`

const SetupBody = styled.div`
    display: flex;
    flex-direction: column;
    gap: 4px;
    height: 71px;
    padding: 3px 3px 0 81px;
`

const SetupRow = styled.div`
    display: flex;
    align-items: center;
    gap: 3px;
    height: 19px;
    border: ${(props) => (props.clear ? '0' : '1px solid #c6c8c7')};
    border-left: 0;
    background: ${(props) => (props.clear ? 'none' : '#dfe1e0')};
`

/* small down arrow painted behind the select text */
const arrow = (right) => `conic-gradient(from -45deg at 50% 100%, #555 90deg, transparent 0) right ${right}px center / 6px 3px no-repeat`

const SetupSelect = styled.select`
    appearance: none;
    flex: ${(props) => (props.grow ? 1 : 'none')};
    width: ${(props) => (props.w ? props.w + 'px' : 'auto')};
    height: 100%;
    padding-left: 3px;
    border: ${(props) => (props.off ? '0' : '1px solid #c6c8c7')};
    background: ${arrow(4)}, ${(props) => (props.off ? '#dadcdb' : '#fdfefd')};
`

const SetupBtn = styled.button`
    width: 18px;
    height: 16px;
`

const Rainbow = styled.span`
    width: 8px;
    height: 17px;
    margin: 0 5px 0 4px;
    background: linear-gradient(#1c3cd8, #1cc8d8, #3cd83c, #f4e828, #e83c1c);
`

const Work = styled.div`
    display: flex;
    flex: 1;
    gap: 6px;
    min-height: 0;
    border-top: 2px solid #515352;
    background: #e9ebea;
`

const Side = styled.aside`
    display: flex;
    flex-direction: column;
    flex: none;
    width: 360px;
    border-right: 1px solid #7c7e7d;
    background: #e9ebea;
    font: 11px/16px ${MONO};
`

const SideTitle = styled.header`
    display: flex;
    align-items: center;
    justify-content: flex-end;
    gap: 3px;
    flex: none;
    height: 21px;
    padding-right: 4px;
    background: linear-gradient(#f8cb1c, #eda42c);
`

const TitleBtn = styled.button`
    display: flex;
    align-items: center;
    justify-content: center;
    width: 16px;
    height: 16px;
`

const TreeBox = styled.div`
    display: flex;
    flex: 1;
    min-height: 0;
    padding-top: 3px;
    background: #fff;
`

const TreeList = styled.div`
    display: flex;
    flex-direction: column;
    flex: 1;
    min-width: 0;
    overflow: hidden;
`

const TreeRow = styled.label`
    display: flex;
    align-items: center;
    flex: 1 1 0;
    gap: 5px;
    min-height: 0;
    margin-left: ${(props) => props.level * 16 - 11}px;
    white-space: pre;
`

const TreeText = styled.span`
    height: 16px;
    padding-right: 10px;
    line-height: 16px;
    background: ${(props) => (props.look == 'selected' ? '#0b74d1' : 'none')};
    color: ${(props) => (props.look == 'selected' ? '#fff' : '#333')};
    font-size: ${(props) => (props.look == 'cjk' ? 12 : 11)}px;
    font-weight: ${(props) => (props.look == 'selected' || props.look == 'bold' ? 700 : 400)};
    font-style: ${(props) => (props.look == 'italic' ? 'italic' : 'normal')};
`

const Tick = styled.input`
    && {
        appearance: none;
        flex: none;
        width: 13px;
        height: 13px;
        border: 1px solid #7f9c9f;
        border-radius: 2px;
        background: #e8eceb;
    }

    &&:checked {
        background: #f3f0c4;
    }

    &:checked::before {
        content: '';
        display: block;
        width: 4px;
        height: 7px;
        margin: 1px 0 0 4px;
        border: solid #8a1a5a;
        border-width: 0 2px 2px 0;
        transform: rotate(40deg);
    }
`

const Scroll = styled.div`
    width: 12px;
    margin-right: 4px;
    padding: 91px 3px 0 5px;
    background: #eceeed;
`

const Thumb = styled.div`
    height: 300px;
    background: #8d8f8e;
`

const Splitter = styled.div`
    flex: none;
    height: 15px;
    border-top: 5px solid #868887;
    border-bottom: 2px solid #a4a6a5;
    background: #eceeed;
`

const PaneTabs = styled.div`
    display: flex;
    flex: none;
    height: ${(props) => (props.bottom ? 23 : 22)}px;
    padding-bottom: ${(props) => (props.bottom ? 3 : 2)}px;
    border-top: 1px solid ${(props) => (props.bottom ? '#333' : '#e9ebea')};
`

const PaneTab = styled.button`
    display: flex;
    align-items: center;
    gap: 6px;
    flex: none;
    width: ${(props) => props.w}px;
    border-right: 1px solid #9c9e9d;
    border-bottom: 1px solid ${(props) => (props.on ? '#111' : '#b4b6b5')};
    padding-left: ${(props) => (props.on ? 6 : 0)}px;
`

const PaneHead = styled.div`
    flex: none;
    height: 27px;
    border-top: 1px solid #a4a6a5;
    border-bottom: 1px solid #a4a6a5;
    background: linear-gradient(#f2f4f3, #dfe1e0);
    font-weight: 700;
    line-height: 26px;
`

const PaneBody = styled.div`
    flex: none;
    height: 107px;
    background: #fff;
`

const Main = styled.main`
    display: flex;
    flex-direction: column;
    flex: 1;
    min-width: 0;
    border-left: 1px solid #555756;
`

const WindowTabs = styled.div`
    display: flex;
    flex: none;
    height: 23px;
    border-top: 1px solid #6c6e6d;
    border-bottom: 1px solid #a4a6a5;
    background: #515352;
`

const WindowTab = styled.div`
    display: flex;
    align-items: center;
    width: ${(props) => (props.on ? 334 : 260)}px;
    padding: 0 5px 0 1px;
    border-left: 1px solid #8a8cc8;
    background: ${(props) => (props.on ? 'linear-gradient(#f8cb1c, #eda42c)' : 'linear-gradient(#f2f4f3, #e2e4e3)')};
    font: 12px/20px "Liberation Serif", serif;
    white-space: nowrap;
`

const Badge = styled.b`
    width: 17px;
    height: 17px;
    margin-right: 1px;
    background: #1f6c96;
    color: #e8f4fa;
    font: 700 12px/17px "Liberation Sans", sans-serif;
    text-align: center;
`

const AnyText = styled.span`
    margin-left: 16px;
    white-space: pre;
`

const CloseBtn = styled.button`
    margin-left: auto;
    padding: 2px;
`

const View = styled.div`
    position: relative;
    flex: 1;
    min-height: 0;
    background: #000;
`

const Canvas = styled.svg`
    width: 100%;
    height: 100%;
    font-family: "Liberation Sans", sans-serif;
`

const StatusLine = styled.div`
    flex: none;
    height: 6px;
    border-top: 2px solid #f6f8f7;
    background: #b9bbba;
`

/* floats over the canvas */
const ToolBar = styled.div`
    position: absolute;
    top: 0;
    left: 503px;
    display: flex;
    align-items: center;
    width: 626px;
    height: 24px;
    padding: 0 2px;
    background: #e6e8e7;
`

const ToolBtn = styled.button`
    display: flex;
    align-items: center;
    height: 21px;
    padding: 0 2px 0 1px;
    border: 1px solid ${(props) => (props.on ? '#b89a3c' : 'transparent')};
    background: ${(props) => (props.on ? '#f6dc7c' : 'none')};
`

const PinBtn = styled.button`
    margin: 0 8px 0 auto;
`

const ToolSep = styled.span`
    width: 1px;
    height: 16px;
    margin: 0 2px;
    background: #b4b6b5;
`

const ToolSelect = styled.select`
    appearance: none;
    flex: none;
    width: ${(props) => props.w}px;
    height: 22px;
    margin-right: ${(props) => props.after}px;
    padding-left: 5px;
    background: ${arrow(3)}, #fdfefd;
    font-size: 13px;
`

const MenuBox = styled.div`
    position: absolute;
    top: 279px;
    bottom: -14px;
    left: 108px;
    display: flex;
    flex-direction: column;
    width: 288px;
    padding: 3px 1px 0;
    border: 1px solid #9c9e9d;
    background: linear-gradient(#e2e6e4, #e2e6e4) 24px 0 / 1px 100% no-repeat, #fefefe;
    color: #46586a;
`

const MenuItem = styled.button`
    display: flex;
    align-items: center;
    flex: 1 1 0;
    min-height: 0;
    border: 1px solid ${(props) => (props.hot ? '#e6c658' : 'transparent')};
    background: ${(props) => (props.hot ? 'linear-gradient(#fff0b0, #fdd978)' : 'none')};
    color: ${(props) => (props.off ? '#bdb6b6' : 'inherit')};
    text-align: left;
`

const IconCell = styled.span`
    flex: none;
    width: 28px;
    padding-left: 2px;
`

const MenuText = styled.span`
    flex: 1;
    white-space: nowrap;
`

const MenuSep = styled.hr`
    flex: none;
    width: 256px;
    height: 2px;
    margin: 0 0 0 auto;
    border: 0;
    border-top: 1px dotted #8c8e8d;
`

const SubMark = styled.i`
    align-self: stretch;
    width: 14px;
    border-left: 1px solid #eedc90;

    &::after {
        content: '';
        display: block;
        width: 0;
        margin: 6px 0 0 5px;
        border: 3px solid transparent;
        border-left-color: #a8aaa9;
    }
`

const Tip = styled.div`
    position: absolute;
    top: 500px;
    left: 188px;
    width: 187px;
    padding: 0 0 0 2px;
    border: 1px solid #b4b6b5;
    background: #e4e6e5;
    color: #5c5e5d;
    font-size: 11px;
    white-space: nowrap;

    b { display: block; }
`

const Pointer = styled.svg`
    position: absolute;
    top: 483px;
    left: 188px;
`
